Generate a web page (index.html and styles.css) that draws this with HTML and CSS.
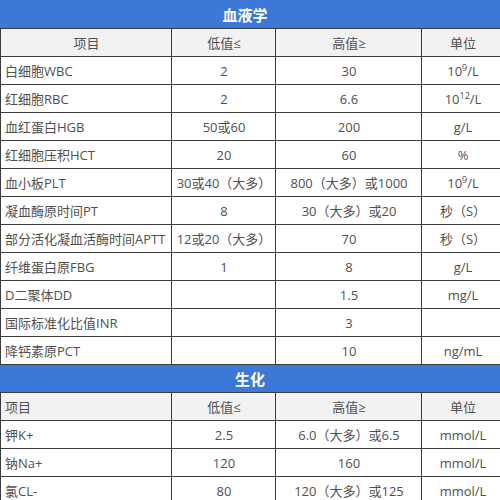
FILE: index.html
```html
<!DOCTYPE html>
<html lang="zh">
<head>
<meta charset="utf-8">
<link rel="stylesheet" href="styles.css">
</head>
<body>
<div class="wrap">
<table class="lab">
<colgroup><col class="c1"><col class="c2"><col class="c3"><col class="c4"></colgroup>
<tbody>
<tr class="banner"><td colspan="4" class="b1">血液学</td></tr>
<tr class="head"><td class="ctr">项目</td><td>低值≤</td><td>高值≥</td><td>单位</td></tr>
<tr><td>白细胞WBC</td><td>2</td><td>30</td><td>10<sup>9</sup>/L</td></tr>
<tr><td>红细胞RBC</td><td>2</td><td>6.6</td><td>10<sup>12</sup>/L</td></tr>
<tr><td>血红蛋白HGB</td><td>50或60</td><td>200</td><td>g/L</td></tr>
<tr><td>红细胞压积HCT</td><td>20</td><td>60</td><td>%</td></tr>
<tr><td>血小板PLT</td><td>30或40（大多）</td><td>800（大多）或1000</td><td>10<sup>9</sup>/L</td></tr>
<tr><td>凝血酶原时间PT</td><td>8</td><td>30（大多）或20</td><td>秒（S）</td></tr>
<tr><td>部分活化凝血活酶时间APTT</td><td>12或20（大多）</td><td>70</td><td>秒（S）</td></tr>
<tr><td>纤维蛋白原FBG</td><td>1</td><td>8</td><td>g/L</td></tr>
<tr><td>D二聚体DD</td><td></td><td>1.5</td><td>mg/L</td></tr>
<tr><td>国际标准化比值INR</td><td></td><td>3</td><td></td></tr>
<tr><td>降钙素原PCT</td><td></td><td>10</td><td>ng/mL</td></tr>
<tr class="banner"><td colspan="4" class="b2">生化</td></tr>
<tr class="head"><td>项目</td><td>低值≤</td><td>高值≥</td><td>单位</td></tr>
<tr><td>钾K+</td><td>2.5</td><td>6.0（大多）或6.5</td><td>mmol/L</td></tr>
<tr><td>钠Na+</td><td>120</td><td>160</td><td>mmol/L</td></tr>
<tr><td>氯CL-</td><td>80</td><td>120（大多）或125</td><td>mmol/L</td></tr>
</tbody>
</table>
</div>
</body>
</html>
```
FILE: styles.css
```css
html, body {
  margin: 0;
  padding: 0;
  background: #ffffff;
}
.wrap {
  width: 500px;
  height: 500px;
  overflow: hidden;
}
.lab {
  border-collapse: collapse;
  table-layout: fixed;
  width: 503px;
  font-family: "Open Sans", "Liberation Sans", "Noto Sans CJK SC", sans-serif;
  font-size: 13px;
  color: #505050;
}
.c1 { width: 171px; }
.c2 { width: 104px; }
.c3 { width: 146px; }
.c4 { width: 82px; }
.lab td {
  border: 1px solid #3c3c3c;
  height: 27px;
  padding: 0 3px 0 4px;
  text-align: center;
  white-space: nowrap;
  line-height: 16px;
}
.lab tr td:first-child {
  text-align: left;
}
.lab tr.head td {
  background: #f2f2f2;
}
.lab tr.head td.ctr {
  text-align: center;
}
.lab tr.banner td {
  background: #3b78d8;
  color: #ffffff;
  font-family: "Noto Sans CJK SC", sans-serif;
  font-weight: bold;
  font-size: 15px;
  text-align: center;
  border-left-color: #3b78d8;
  border-top-color: #3b78d8;
  height: 27px;
}
.lab tr.banner td.b1 {
  padding-right: 18px;
}
.lab tr.banner td.b2 {
  padding-right: 8px;
}
.lab sup {
  font-size: 9px;
  line-height: 0;
  vertical-align: 5px;
}
```
